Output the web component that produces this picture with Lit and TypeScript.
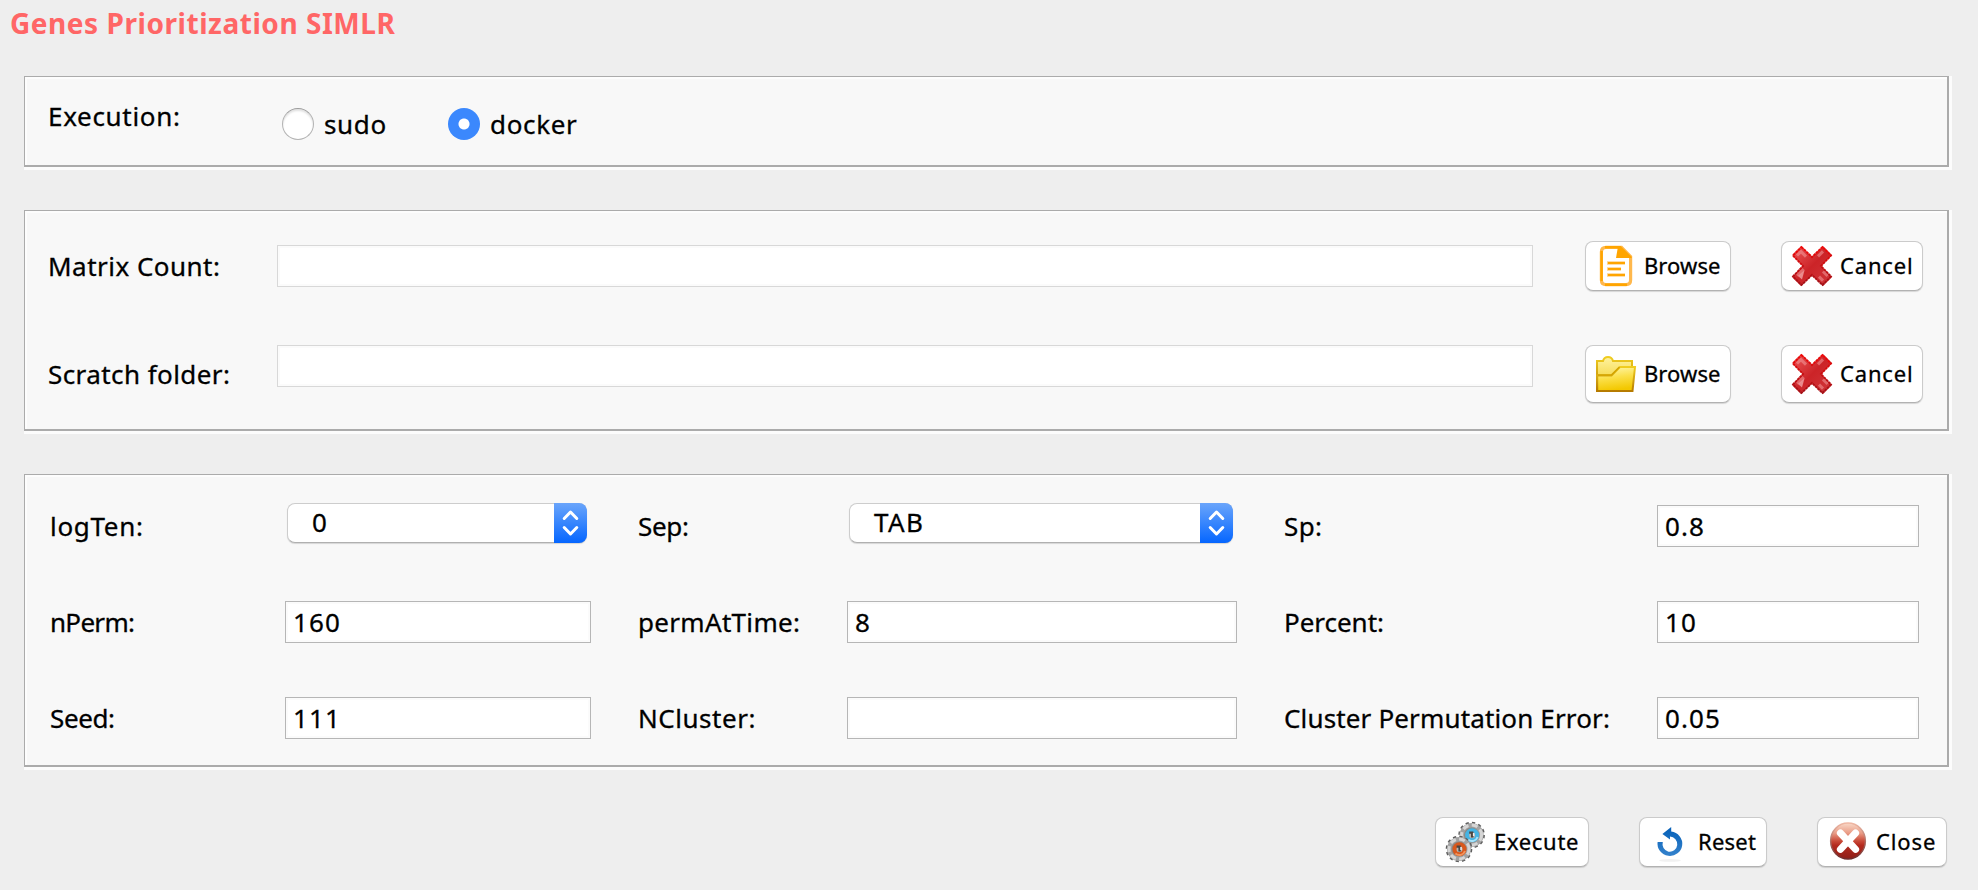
import { LitElement, html, css, svg } from "lit";
import { customElement, property } from "lit/decorators.js";
import { styleMap } from "lit/directives/style-map.js";

const pen = document.createElement("canvas").getContext("2d")!;

/* A single line of text, tracked so that its glyphs span a given width. */
@customElement("fit-text")
class FitText extends LitElement {
  @property() text = "";
  @property({ type: Number }) span = 0;
  @property({ type: Number }) size = 26;
  @property({ type: Number }) weight = 400;

  static styles = css`
    :host { display: block; white-space: pre; }
  `;

  render() {
    pen.font = `${this.weight} ${this.size}px "Noto Sans"`;
    const m = pen.measureText(this.text);
    const ink = m.actualBoundingBoxLeft + m.actualBoundingBoxRight;
    const tracking = this.text.length > 1 ? (this.span - ink) / (this.text.length - 1) : 0;
    return html`<span style=${styleMap({ letterSpacing: `${tracking.toFixed(3)}px` })}>${this.text}</span>`;
  }
}

const teeth = (r: number) => `${(2 * Math.PI * r) / 24} ${(2 * Math.PI * r) / 24}`;

const gear = (cx: number, cy: number, color: string, light: string) => svg`
  <circle cx=${cx} cy=${cy} r="11.6" fill="none" stroke="#5e5e5e" stroke-width="3.4" stroke-dasharray=${teeth(11.6)}/>
  <circle cx=${cx} cy=${cy} r="12" fill="#a2a2a2"/>
  <circle cx=${cx} cy=${cy} r="10" fill="none" stroke="#d6d6d6" stroke-width="3" stroke-dasharray="6 3.4"/>
  <circle cx=${cx} cy=${cy} r="7.6" fill="#8d8782"/>
  <circle cx=${cx + 0.5} cy=${cy + 0.3} r="5" fill="#b9b5b2" stroke=${color} stroke-width="4"/>
  <path d="M${cx - 3.6} ${cy + 4.6}A6 6 0 0 0 ${cx + 6} ${cy + 2}" fill="none" stroke=${light} stroke-width="2"/>
  <path d="M${cx - 2.4} ${cy - 2.4}h3v5" fill="none" stroke="#4b4541" stroke-width="2.4"/>
  <path d="M${cx + 2} ${cy - 2}v3" stroke="#eee" stroke-width="1.4"/>`;

const cross = "M9 0L20 10.6L31 0L40 9L29.4 20L40 31L31 40L20 29.4L9 40L0 31L10.6 20L0 9Z";

const icons: Record<string, unknown> = {
  doc: svg`
    <path d="M10 1.4H25.5L34.6 10.6V34Q34.6 38.6 30 38.6H10Q5.4 38.6 5.4 34V6Q5.4 1.4 10 1.4Z" fill="#fff" stroke="#ffb84d" stroke-width="3.2"/>
    <path d="M9 1.2H25M9 38.8H31M5.6 5V35" fill="none" stroke="#ffa500" stroke-width="2.4"/>
    <path d="M22 0.4H25L35.6 11V12H20Z" fill="#ffa500"/>
    <path d="M11 17H29M11 23H25M11 29H29" stroke="#ffd28a" stroke-width="3.4"/>
    <path d="M12 17H29M12 23H25M12 29H29" stroke="#ffa500" stroke-width="2"/>`,
  folder: svg`
    <defs>
      <linearGradient id="fb" x2="0" y2="1"><stop offset="0" stop-color="#fff3a0"/><stop offset="1" stop-color="#eec91c"/></linearGradient>
      <linearGradient id="ff" x2="0.2" y2="1"><stop offset="0" stop-color="#fff8b4"/><stop offset=".5" stop-color="#fbe04a"/><stop offset="1" stop-color="#f3c800"/></linearGradient>
      <linearGradient id="fs" x2="0" y2="1"><stop offset="0" stop-color="#f0cd20"/><stop offset="1" stop-color="#b67b00"/></linearGradient>
    </defs>
    <path d="M1 7H7Q8 3 12 3Q16 3 17 7H36V15L34 37H1Z" fill="url(#fb)" stroke="url(#fs)" stroke-width="2"/>
    <path d="M1.2 21.5H15.5L24 13H39L36.5 37H1.2Z" fill="url(#ff)" stroke="url(#fs)" stroke-width="2"/>
    <path d="M2 21H15.5L23.5 13" fill="none" stroke="#d3a300" stroke-width="1.6"/>`,
  cancel: svg`
    <defs>
      <linearGradient id="cx" x1="0" y1="0" x2="1" y2="1"><stop offset="0" stop-color="#ee5a5a"/><stop offset=".5" stop-color="#cc2428"/><stop offset="1" stop-color="#d0383c"/></linearGradient>
      <linearGradient id="ce" x2="0" y2="1"><stop offset="0" stop-color="#f00808"/><stop offset="1" stop-color="#a01218"/></linearGradient>
    </defs>
    <path d=${cross} fill="url(#cx)"/>
    <path d="M5 9.5L9 5.6L14 10.6M31 5.4L26 10.4M11.6 23L5 29.6M35.6 30L31 25.4M31 34.6L27 30.6" fill="none" stroke="#f5a3a5" stroke-width="3" opacity=".5"/>
    <path d="M6 30L12.6 24L10 33.6Z" fill="#f7b5b6" opacity=".7"/>
    <path d=${cross} fill="none" stroke="url(#ce)" stroke-width="2" stroke-dasharray="2.8 .7" transform="translate(1 1) scale(.95)"/>`,
  gears: svg`${gear(25.6, 13, "#45b4e4", "#a6e3fa")}${gear(13, 27, "#d9581c", "#f2935c")}`,
  reset: svg`
    <defs><linearGradient id="rs" x2="0" y2="1"><stop offset="0" stop-color="#0560b8"/><stop offset="1" stop-color="#3482cc"/></linearGradient></defs>
    <ellipse cx="20" cy="38.4" rx="11" ry="1.4" fill="#f1f1f1"/>
    <path d="M7.6 20H12.8A7.4 7.6 0 1 0 20 14.6V17.6L12.4 12L21.2 5V9.6A12.4 12.2 0 1 1 7.6 20Z" fill="url(#rs)"/>`,
  close: svg`
    <defs>
      <linearGradient id="cl" x2="0" y2="1"><stop offset="0" stop-color="#f9d9c8"/><stop offset=".28" stop-color="#ea9c86"/><stop offset=".5" stop-color="#c94a38"/><stop offset=".62" stop-color="#b42a1e"/><stop offset="1" stop-color="#8e1d18"/></linearGradient>
      <linearGradient id="cr" x2="0" y2="1"><stop offset="0" stop-color="#f0b8a4"/><stop offset="1" stop-color="#6e2a2a"/></linearGradient>
    </defs>
    <ellipse cx="20" cy="19" rx="17.4" ry="18" fill="url(#cl)" stroke="url(#cr)" stroke-width="1.4"/>
    <path d="M12.4 11L27.6 27.4M27.6 11L12.4 27.4" stroke="#fff" stroke-width="7" stroke-linecap="round"/>`,
};

@customElement("push-button")
class PushButton extends LitElement {
  @property() icon = "";
  @property() label = "";
  @property({ type: Number }) span = 0;

  static styles = css`
    :host { display: flex; }
    .btn {
      flex: 1; display: flex; align-items: center; gap: 8px; box-sizing: border-box;
      margin: 0; padding: 0 0 0 10px; border: 1px solid #cbcbcb; border-bottom-color: #b2b2b2;
      border-radius: 8px; background: #fff; box-shadow: 0 1px 1px rgba(0, 0, 0, .14);
      font: 22px/28px "Noto Sans", sans-serif; color: #000; text-align: left;
      -webkit-text-stroke: .3px #000;
    }
    .glyph { display: block; width: 40px; height: 40px; flex: none; overflow: visible; }
    .caption { padding-bottom: 2px; }
  `;

  render() {
    return html`<button class="btn">
      <svg class="glyph" viewBox="0 0 40 40">${icons[this.icon]}</svg>
      <fit-text class="caption" .text=${this.label} .span=${this.span} .size=${22}></fit-text>
    </button>`;
  }
}

@customElement("combo-box")
class ComboBox extends LitElement {
  @property() value = "";
  @property({ type: Number }) span = 14;

  static styles = css`
    :host { display: block; }
    .combo {
      display: flex; justify-content: space-between; box-sizing: border-box; height: 40px;
      border: 1px solid #cdcdcd; border-bottom-color: #b0b0b0; border-radius: 8px; background: #fff;
      box-shadow: 0 1px 1px rgba(0, 0, 0, .14);
    }
    .value { padding: 2px 0 0 24px; line-height: 32px; }
    .arrows {
      display: block; width: 33px; height: 40px; margin: -1px -1px 0 0; border-radius: 0 8px 8px 0;
      background: linear-gradient(#6aa5fb, #0566ff);
    }
  `;

  render() {
    return html`<div class="combo">
      <fit-text class="value" .text=${this.value} .span=${this.span}></fit-text>
      <svg class="arrows" viewBox="0 0 33 40" fill="none" stroke="#fff" stroke-width="3" stroke-linecap="round" stroke-linejoin="round">
        <path d="M10.2 15.5L16.5 9L22.8 15.5M10.2 24.5L16.5 31L22.8 24.5"/>
      </svg>
    </div>`;
  }
}

@customElement("app-root")
class AppRoot extends LitElement {
  static styles = css`
    :host {
      display: flex; flex-direction: column; box-sizing: border-box; height: 890px;
      padding: 0 29px 0 24px; background: #eeeeee; color: #000;
      font: 26px/32px "Noto Sans", sans-serif; overflow: hidden;
      -webkit-text-stroke: .3px currentColor;
    }
    .title { margin: 7px 0 37px -14px; font-size: 28px; font-weight: 700; color: #ff6666; -webkit-text-stroke: 0; }
    .panel {
      box-sizing: border-box; background: #f8f8f8; flex: none; margin-bottom: 43px;
      border: solid #ababab; border-width: 1px 2px 2px 1px;
      box-shadow: inset 2px 2px 0 #fdfdfd, 3px 0 0 #fcfcfc, 0 3px 0 #fcfcfc, 3px 3px 0 #fcfcfc;
    }
    .execution { display: flex; align-items: flex-start; height: 91px; padding: 23px 0 0 23px; }
    .execution-label { width: 234px; }
    .option { display: flex; gap: 10px; margin-top: 8px; width: 166px; }
    .radio {
      box-sizing: border-box; width: 32px; height: 32px; border-radius: 50%;
      border: 1px solid #b4b4b4; border-top-color: #9c9c9c; background: #fff;
      box-shadow: inset 0 2px 2px rgba(0, 0, 0, .12);
    }
    .radio.on { border: 0; background: radial-gradient(circle, #fff 5px, #3b88fd 6px); box-shadow: none; }
    .field {
      display: block; box-sizing: border-box; width: 100%; height: 42px; margin: 0; padding: 0 0 0 7px;
      border: 1px solid #b6b6b6; border-radius: 0; background: #fff; outline: 0; color: #000;
      box-shadow: inset 0 0 0 2px #fbfbfb; font: 26px/32px "Noto Sans", sans-serif; letter-spacing: 1.1px;
      -webkit-text-stroke: .3px #000;
    }
    .files {
      display: grid; grid-template-columns: 229px 1308px 196px 142px; grid-template-rows: 50px 58px;
      row-gap: 54px; height: 221px; padding: 30px 0 0 23px; align-items: start;
    }
    .files .field { width: 1256px; border-color: #d8d8d8; }
    .files .browse { width: 146px; }
    .files .field-1 { margin-top: 4px; }
    .tall { height: 58px; }
    .short { height: 50px; }
    .label-1 { margin-top: 9px; }
    .label-2 { margin-top: 13px; }
    .params {
      display: grid; grid-template-columns: 235px 306px 47px 209px 390px 47px 373px 262px;
      grid-template-rows: repeat(3, 42px); row-gap: 54px; height: 293px; padding: 30px 0 0 25px;
      align-items: start; margin-bottom: 50px;
    }
    .name { margin-top: 5px; }
    .c1 { grid-column: 1; } .c2 { grid-column: 2; } .c4 { grid-column: 4; }
    .c5 { grid-column: 5; } .c7 { grid-column: 7; } .c8 { grid-column: 8; }
    .combo { margin: -2px 4px 0 2px; }
    .actions { display: flex; justify-content: flex-end; gap: 50px; padding-right: 2px; }
    .execute { width: 154px; } .reset { width: 128px; } .close { width: 130px; }
  `;

  render() {
    const rows = [
      [["logTen:", 90, "0"], ["Sep:", 49, "TAB"], ["Sp:", 36, "0.8"]],
      [["nPerm:", 82, "160"], ["permAtTime:", 159, "8"], ["Percent:", 97, "10"]],
      [["Seed:", 63, "111"], ["NCluster:", 114.5, ""], ["Cluster Permutation Error:", 324, "0.05"]],
    ] as [string, number, string][][];
    const names = ["c1", "c4", "c7"];
    const inputs = ["c2", "c5", "c8"];

    return html`
      <fit-text class="title" .text=${"Genes Prioritization SIMLR"} .span=${384.5} .size=${28} .weight=${700}></fit-text>

      <section class="panel execution">
        <fit-text class="execution-label" .text=${"Execution:"} .span=${129}></fit-text>
        <div class="option"><span class="radio"></span><fit-text .text=${"sudo"} .span=${60.5}></fit-text></div>
        <div class="option"><span class="radio on"></span><fit-text .text=${"docker"} .span=${86}></fit-text></div>
      </section>

      <section class="panel files">
        <fit-text class="label-1" .text=${"Matrix Count:"} .span=${169}></fit-text>
        <input class="field field-1">
        <push-button class="browse short" icon="doc" label="Browse" span="74"></push-button>
        <push-button class="short" icon="cancel" label="Cancel" span="70"></push-button>
        <fit-text class="label-2" .text=${"Scratch folder:"} .span=${180}></fit-text>
        <input class="field">
        <push-button class="browse tall" icon="folder" label="Browse" span="74"></push-button>
        <push-button class="tall" icon="cancel" label="Cancel" span="70"></push-button>
      </section>

      <section class="panel params">
        ${rows.map((row, r) => row.map(([name, span, value], c) => html`
          <fit-text class="name ${names[c]}" .text=${name} .span=${span}></fit-text>
          ${r === 0 && c < 2
            ? html`<combo-box class="combo ${inputs[c]}" .value=${value} .span=${48}></combo-box>`
            : html`<input class="field ${inputs[c]}" .value=${value}>`}
        `))}
      </section>

      <footer class="actions">
        <push-button class="execute short" icon="gears" label="Execute" span="82"></push-button>
        <push-button class="reset short" icon="reset" label="Reset" span="56"></push-button>
        <push-button class="close short" icon="close" label="Close" span="58"></push-button>
      </footer>
    `;
  }
}
